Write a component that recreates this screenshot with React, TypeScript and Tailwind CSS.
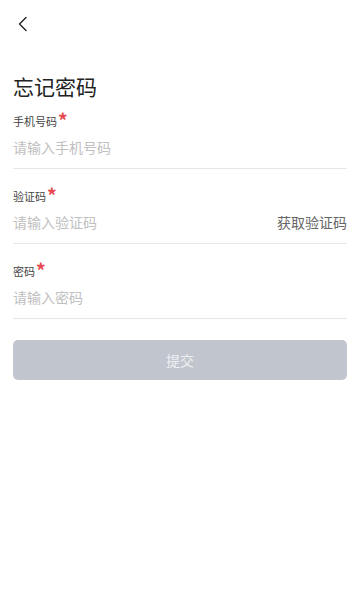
import { useState } from 'react';

const font = { fontFamily: '"Noto Sans CJK SC", "Noto Sans", sans-serif' };

function Field({
  label,
  placeholder,
  action,
}: {
  label: string;
  placeholder: string;
  action?: string;
}) {
  const [value, setValue] = useState('');
  return (
    <div className="mb-[21px]">
      <div className="flex h-[12px] items-center text-[11px] leading-[12px] text-[#444]">
        {label}
        <span className="relative -top-[2px] ml-[1px] text-[19px] font-bold leading-none text-[#e5484d]">*</span>
      </div>
      <div className="flex h-[42px] items-center border-b border-[#e6e7ea]">
        <input
          value={value}
          onChange={(e) => setValue(e.target.value)}
          placeholder={placeholder}
          className="min-w-0 flex-1 bg-transparent text-[14px] text-[#333] outline-none placeholder:text-[#c0c0c0]"
          style={font}
        />
        {action && <button className="text-[14px] text-[#666]" style={font}>{action}</button>}
      </div>
    </div>
  );
}

export default function App() {
  return (
    <div className="min-h-[600px] w-[360px] bg-white" style={font}>
      <div className="flex h-[48px] items-center px-[16px]">
        <svg width="12" height="16" viewBox="0 0 12 16" fill="none" className="ml-[1px]">
          <path d="M9 1.5 2.5 8 9 14.5" stroke="#222" strokeWidth="1.4" strokeLinecap="round" strokeLinejoin="round" />
        </svg>
      </div>
      <div className="px-[13px]">
        <h1 className="mt-[23px] h-[30px] text-[21px] leading-[30px] text-[#222]">忘记密码</h1>
        <div className="mt-[14px]">
          <Field label="手机号码" placeholder="请输入手机号码" />
          <Field label="验证码" placeholder="请输入验证码" action="获取验证码" />
          <Field label="密码" placeholder="请输入密码" />
        </div>
        <button className="mt-[2px] flex h-[40px] w-full items-center justify-center rounded-[5px] bg-[#c1c5cd] text-[14px] text-[#eef0f3]">
          提交
        </button>
      </div>
    </div>
  );
}
